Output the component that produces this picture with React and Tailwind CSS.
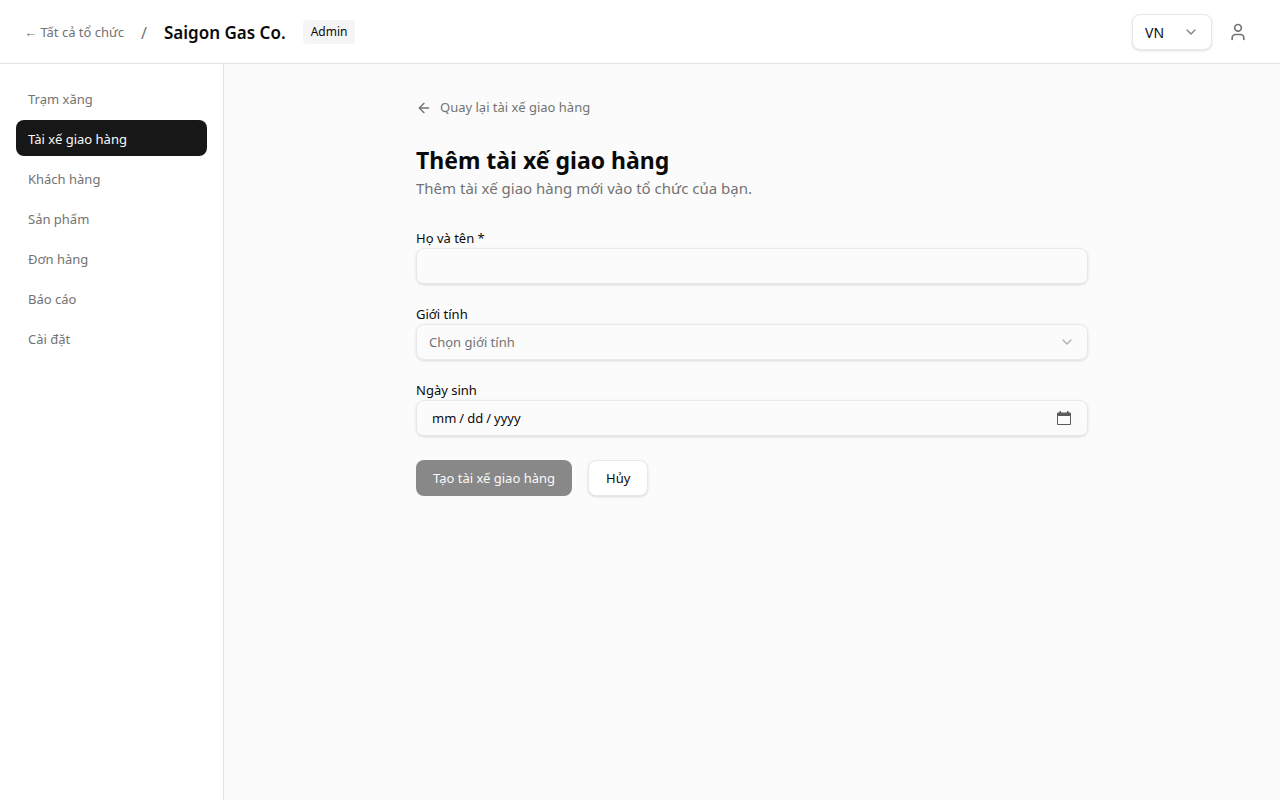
import { useState } from "react";
import { ArrowLeft, ChevronDown, User } from "lucide-react";

const NAV_ITEMS = [
  { label: "Trạm xăng", href: "#stations" },
  { label: "Tài xế giao hàng", href: "#drivers", active: true },
  { label: "Khách hàng", href: "#customers" },
  { label: "Sản phẩm", href: "#products" },
  { label: "Đơn hàng", href: "#orders" },
  { label: "Báo cáo", href: "#reports" },
  { label: "Cài đặt", href: "#settings" },
];

const FIELD =
  "h-9 w-full rounded-lg border border-[#e8e8e8] bg-transparent px-3 pt-[2px] text-[13px] shadow-sm outline-none focus-visible:ring-2 focus-visible:ring-neutral-300";

const LABEL = "block text-[13px] leading-5";

const NAV_LINK = "rounded-lg px-3 pt-[9px] pb-[7px] text-[13px] leading-5";

const BUTTON = "h-9 rounded-lg px-[17px] pt-[2px] text-[13px]";

function CalendarIcon({ className }) {
  return (
    <svg viewBox="0 0 14 14" className={className} aria-hidden="true">
      <path
        fill="currentColor"
        fillRule="evenodd"
        d="M2.5 0h1.5v1.5h6V0h1.5v1.5H13a1 1 0 0 1 1 1V13a1 1 0 0 1-1 1H1a1 1 0 0 1-1-1V2.500a1 1 0 0 1 1-1h1.500zM1 5v8h12V5z"
      />
    </svg>
  );
}

function Header() {
  return (
    <header className="flex h-16 shrink-0 items-center justify-between border-b border-[#e2e2e2] bg-white px-6">
      <div className="flex items-center gap-[17px]">
        <a href="#organizations" className="pt-[2px] text-[13px] leading-5 text-[#737373]">
          <span className="font-['Liberation_Sans',sans-serif]">←</span> Tất cả tổ chức
        </a>
        <span className="pt-[2px] text-[#737373]">/</span>
        <span className="pt-[2px] text-[17px] font-semibold">Saigon Gas Co.</span>
        <span className="rounded-sm bg-neutral-100 px-2 py-1 text-xs">Admin</span>
      </div>
      <div className="flex items-center gap-2">
        <div className="grid w-20 items-center">
          <select
            aria-label="Ngôn ngữ"
            className="col-start-1 row-start-1 h-9 appearance-none rounded-lg border border-[#e8e8e8] bg-white px-3 pt-[2px] text-sm shadow-sm outline-none"
          >
            <option>VN</option>
            <option>EN</option>
          </select>
          <ChevronDown className="pointer-events-none col-start-1 row-start-1 mr-[13px] size-4 justify-self-end text-[#808080]" />
        </div>
        <button type="button" aria-label="Tài khoản" className="flex size-9 items-center justify-center rounded-lg text-[#737373]">
          <User className="size-5" />
        </button>
      </div>
    </header>
  );
}

function Sidebar() {
  return (
    <aside className="w-56 shrink-0 border-r border-[#e2e2e2] bg-white p-4">
      <nav className="flex flex-col gap-1">
        {NAV_ITEMS.map((item) => (
          <a
            key={item.label}
            href={item.href}
            aria-current={item.active ? "page" : undefined}
            className={`${NAV_LINK} ${item.active ? "bg-[#171717] text-[#fafafa]" : "text-[#737373]"}`}
          >
            {item.label}
          </a>
        ))}
      </nav>
    </aside>
  );
}

function DriverForm() {
  const [name, setName] = useState("");
  const [gender, setGender] = useState("");
  return (
    <form className="flex flex-col gap-5" onSubmit={(e) => e.preventDefault()}>
      <div>
        <label htmlFor="name" className={LABEL}>
          Họ và tên *
        </label>
        <input id="name" value={name} onChange={(e) => setName(e.target.value)} className={FIELD} />
      </div>
      <div>
        <label htmlFor="gender" className={LABEL}>
          Giới tính
        </label>
        <div className="grid items-center">
          <select
            id="gender"
            value={gender}
            onChange={(e) => setGender(e.target.value)}
            className={`${FIELD} col-start-1 row-start-1 appearance-none text-[#737373]`}
          >
            <option value="">Chọn giới tính</option>
            <option value="male">Nam</option>
            <option value="female">Nữ</option>
          </select>
          <ChevronDown className="pointer-events-none col-start-1 row-start-1 mr-[13px] size-4 justify-self-end opacity-30" />
        </div>
      </div>
      <div>
        <label htmlFor="birthday" className={LABEL}>
          Ngày sinh
        </label>
        <div className="grid items-center">
          <input
            id="birthday"
            type="date"
            className={`${FIELD} col-start-1 row-start-1 [&::-webkit-calendar-picker-indicator]:opacity-0 [&::-webkit-datetime-edit]:pl-[2px] [&::-webkit-datetime-edit-text]:px-[2px]`}
          />
          <CalendarIcon className="pointer-events-none col-start-1 row-start-1 mr-[17px] size-[14px] justify-self-end text-[#5b5b5b]" />
        </div>
      </div>
      <div className="mt-1 flex gap-4">
        <button type="submit" disabled={!name} className={`${BUTTON} bg-[#171717] text-[#fafafa] disabled:opacity-50`}>
          Tạo tài xế giao hàng
        </button>
        <button type="button" className={`${BUTTON} border border-[#e8e8e8] bg-white shadow-sm`}>
          Hủy
        </button>
      </div>
    </form>
  );
}

export default function App() {
  return (
    <div className="flex min-h-screen flex-col bg-[#fbfbfb] font-['Noto_Sans',sans-serif] text-[#0a0a0a]">
      <Header />
      <div className="flex flex-1">
        <Sidebar />
        <main className="flex-1 px-8 py-8">
          <div className="mx-auto max-w-2xl">
            <a href="#drivers" className="mb-6 flex h-6 w-fit items-center gap-2 text-[13px] text-[#737373]">
              <ArrowLeft className="size-4" />
              Quay lại tài xế giao hàng
            </a>
            <div className="mb-7">
              <h1 className="text-[23px] leading-8 font-bold">Thêm tài xế giao hàng</h1>
              <p className="text-[15px] leading-6 text-[#737373]">Thêm tài xế giao hàng mới vào tổ chức của bạn.</p>
            </div>
            <DriverForm />
          </div>
        </main>
      </div>
    </div>
  );
}
